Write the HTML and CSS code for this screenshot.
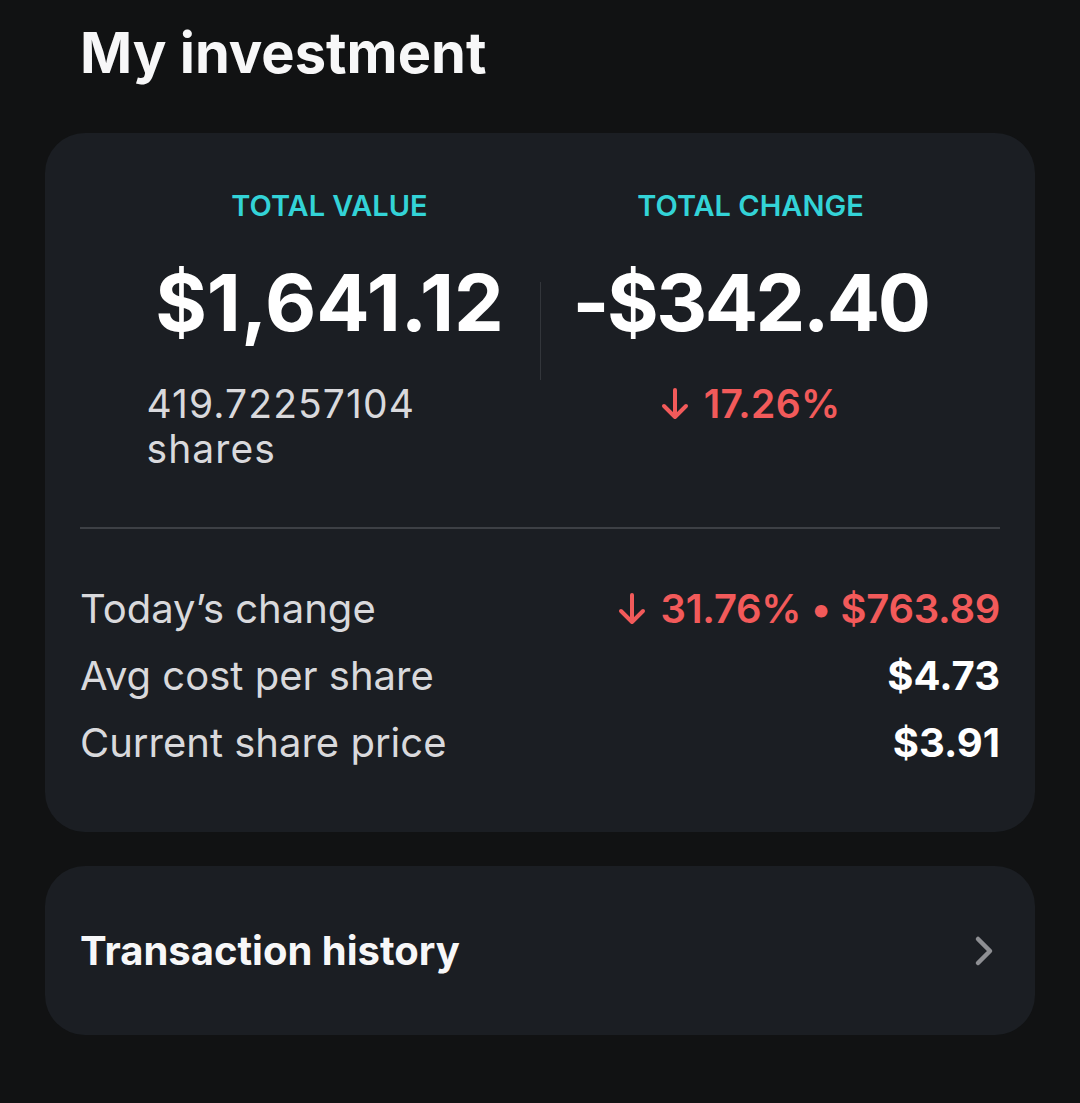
FILE: index.html
```html
<!DOCTYPE html>
<html lang="en">
<head>
<meta charset="utf-8">
<title>My investment</title>
<link rel="stylesheet" href="styles.css">
</head>
<body>
<main class="page">
  <h1 class="title">My investment</h1>

  <section class="card summary">
    <div class="totals">
      <div class="col">
        <div class="label">TOTAL VALUE</div>
        <div class="big">$1,641.12</div>
        <div class="sub">419.72257104 shares</div>
      </div>
      <div class="vdivider"></div>
      <div class="col">
        <div class="label">TOTAL CHANGE</div>
        <div class="big tight">-$342.40</div>
        <div class="sub neg center">
          <svg class="arrow" viewBox="0 0 28 34" width="28" height="34" aria-hidden="true"><path d="M14 3 V30 M3 19 L14 30 L25 19" fill="none" stroke="currentColor" stroke-width="4" stroke-linecap="round" stroke-linejoin="round"/></svg>
          <span>17.26%</span>
        </div>
      </div>
    </div>

    <div class="hdivider"></div>

    <div class="rows">
      <div class="row">
        <span class="key">Today’s change</span>
        <span class="val neg">
          <svg class="arrow" viewBox="0 0 28 34" width="28" height="34" aria-hidden="true"><path d="M14 3 V30 M3 19 L14 30 L25 19" fill="none" stroke="currentColor" stroke-width="4" stroke-linecap="round" stroke-linejoin="round"/></svg>
          <span>31.76% • $763.89</span>
        </span>
      </div>
      <div class="row">
        <span class="key">Avg cost per share</span>
        <span class="val">$4.73</span>
      </div>
      <div class="row">
        <span class="key">Current share price</span>
        <span class="val">$3.91</span>
      </div>
    </div>
  </section>

  <a class="card link" href="#">
    <span class="link-text">Transaction history</span>
    <svg class="chev" viewBox="0 0 24 36" width="24" height="36" aria-hidden="true"><path d="M6 6 L18 18 L6 30" fill="none" stroke="currentColor" stroke-width="4.5" stroke-linecap="round" stroke-linejoin="round"/></svg>
  </a>
</main>
</body>
</html>
```

FILE: styles.css
```css
html, body {
  margin: 0;
  padding: 0;
  background: #111213;
}
body {
  font-family: Inter, "Noto Sans", "Liberation Sans", sans-serif;
  color: #f6f6f7;
  width: 1080px;
  height: 1103px;
  overflow: hidden;
}
.page {
  padding: 19px 45px 0 45px;
  display: flex;
  flex-direction: column;
}
.title {
  margin: 0 0 46px 35px;
  font-size: 56px;
  line-height: 68px;
  font-weight: 700;
  letter-spacing: 0;
  color: #f7f7f8;
}
.card {
  background: #1b1e23;
  border-radius: 40px;
}
.summary {
  padding: 55px 35px 56px 35px;
}
.totals {
  display: flex;
  justify-content: center;
  gap: 27px;
}
.col {
  width: 366px;
  display: flex;
  flex-direction: column;
  align-items: center;
}
.label {
  font-size: 29px;
  line-height: 36px;
  font-weight: 600;
  color: #33d3d7;
  margin-bottom: 32px;
}
.big {
  font-size: 79px;
  line-height: 92px;
  font-weight: 700;
  color: #ffffff;
  letter-spacing: 0;
  margin-bottom: 33px;
}
.big.tight {
  letter-spacing: -2.5px;
}
.sub {
  align-self: stretch;
  font-size: 39px;
  line-height: 45px;
  letter-spacing: 1.1px;
  color: #d9d9dc;
}
.sub.center {
  align-self: center;
  display: flex;
  align-items: center;
  gap: 15px;
  font-weight: 600;
  letter-spacing: 0.3px;
}
.neg {
  color: #f25a5a;
}
.vdivider {
  width: 1px;
  height: 98px;
  margin-top: 94px;
  background: #33363b;
}
.hdivider {
  height: 2px;
  background: #3d4045;
  margin: 56px 0 46px 0;
}
.rows {
  display: flex;
  flex-direction: column;
}
.row {
  display: flex;
  justify-content: space-between;
  align-items: center;
  height: 67px;
}
.key {
  font-size: 40px;
  line-height: 67px;
  color: #d9d9dc;
}
.val {
  font-size: 40px;
  line-height: 67px;
  font-weight: 700;
  color: #ffffff;
  display: flex;
  align-items: center;
  gap: 15px;
}
.val.neg {
  color: #f25a5a;
  font-weight: 600;
  letter-spacing: -0.3px;
}
.arrow {
  display: block;
}
.link {
  margin-top: 34px;
  height: 169px;
  display: flex;
  align-items: center;
  justify-content: space-between;
  padding: 0 35px;
  text-decoration: none;
}
.link-text {
  font-size: 40px;
  font-weight: 700;
  color: #f7f7f8;
}
.chev {
  display: block;
  color: #8e8f93;
  margin-right: 4px;
}
```
